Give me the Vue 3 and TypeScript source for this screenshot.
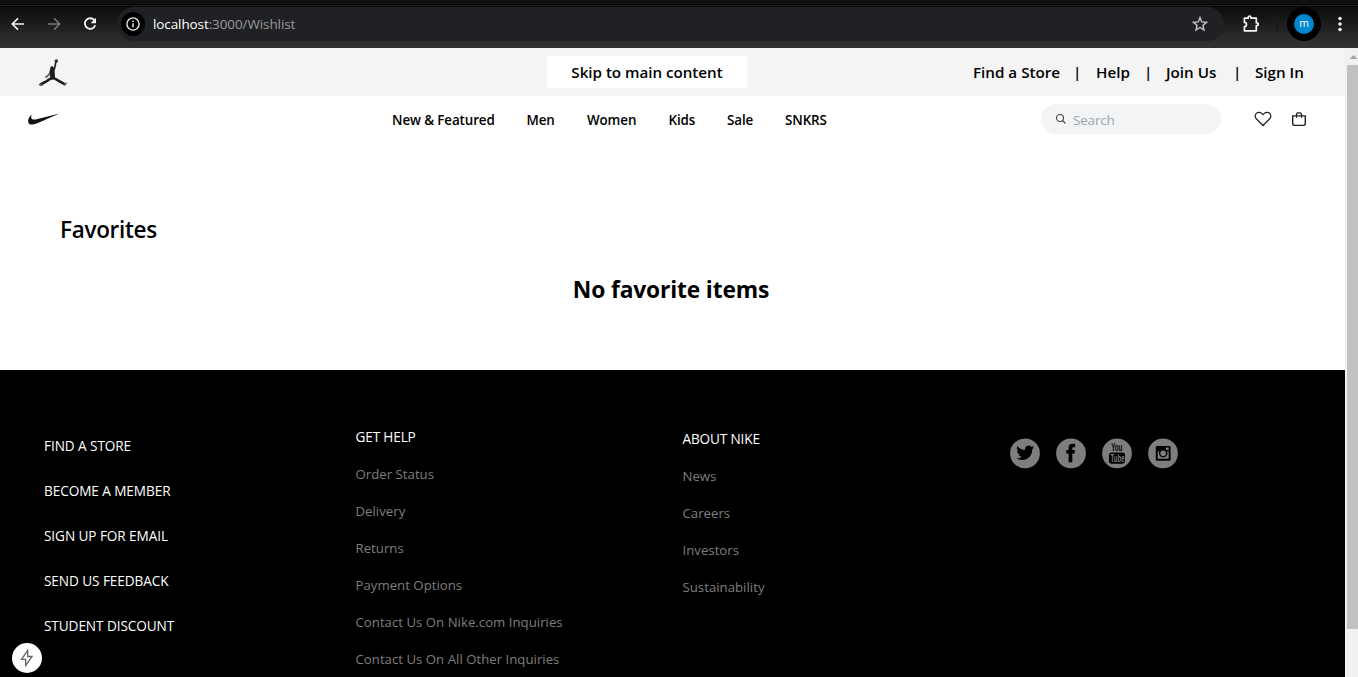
<script setup lang="ts">
interface Column { title: string; key: string; links: string[] }

const topLinks: string[] = ['Find a Store', '|', 'Help', '|', 'Join Us', '|', 'Sign In']
const navItems: string[] = ['New & Featured', 'Men', 'Women', 'Kids', 'Sale', 'SNKRS']
const primaryLinks: string[] = ['FIND A STORE', 'BECOME A MEMBER', 'SIGN UP FOR EMAIL', 'SEND US FEEDBACK', 'STUDENT DISCOUNT']
const columns: Column[] = [
  {
    title: 'GET HELP',
    key: 'help',
    links: ['Order Status', 'Delivery', 'Returns', 'Payment Options', 'Contact Us On Nike.com Inquiries', 'Contact Us On All Other Inquiries'],
  },
  { title: 'ABOUT NIKE', key: 'about', links: ['News', 'Careers', 'Investors', 'Sustainability'] },
]
</script>

<template>
  <div class="window">
    <header class="browser">
      <div class="tabstrip"></div>
      <div class="toolbar">
        <svg class="tool back" viewBox="0 0 16 16"><path d="M14 8H2.5M8 2.3 2.3 8 8 13.7" fill="none" stroke="#f1f1f1" stroke-width="1.7" /></svg>
        <svg class="tool forward" viewBox="0 0 16 16"><path d="M2 8h11.5M8 2.3 13.7 8 8 13.7" fill="none" stroke="#777" stroke-width="1.6" /></svg>
        <svg class="tool reload" viewBox="0 0 16 16"><path d="M12.6 4.6A5.3 5.3 0 1 0 13.2 9.3" fill="none" stroke="#f4f4f4" stroke-width="1.8" /><path d="M14 1.8v5.4H8.6z" fill="#f4f4f4" /></svg>
        <div class="omnibox">
          <span class="info">
            <svg viewBox="0 0 16 16"><circle cx="8" cy="8" r="6.1" fill="none" stroke="#e8e8e8" stroke-width="1.4" /><path d="M8 7.2v4M8 4.5v1.5" stroke="#e8e8e8" stroke-width="1.5" /></svg>
          </span>
          <span class="url"><b>localhost</b>:3000/Wishlist</span>
          <svg class="star" viewBox="0 0 16 16"><path d="m8 1.6 1.8 4.3 4.7.4-3.6 3.1 1.1 4.6L8 11.5 4 14l1.1-4.6-3.6-3.1 4.7-.4z" fill="none" stroke="#c9c9c9" stroke-width="1.35" /></svg>
        </div>
        <svg class="puzzle" viewBox="0 0 18 18"><path d="M2.4 3.2H6.2V2.6a1.4 1.4 0 0 1 2.8 0v.6h5.3v4.7h.6a1.4 1.4 0 0 1 0 2.8h-.6v5.1H2.4v-4.2a2.1 2.1 0 0 0 0-4.2z" fill="none" stroke="#f4f4f4" stroke-width="1.7" stroke-linejoin="round" /></svg>
        <span class="tool-divider"></span>
        <span class="profile"><span class="avatar">m</span></span>
        <svg class="menu" viewBox="0 0 4 16"><circle cx="2" cy="2.5" r="1.75" /><circle cx="2" cy="8" r="1.75" /><circle cx="2" cy="13.5" r="1.75" /></svg>
      </div>
    </header>

    <div class="viewport">
      <div class="page">
        <div class="brandbar">
          <svg class="jordan" viewBox="0 0 30 30"><g fill="none" stroke="#1c1c1c" stroke-linecap="round" stroke-linejoin="round"><path d="M17.9 3.6 17.2 7.5l-1 4" stroke-width="1.6" /><path d="m13.2 12-2 4.5-3 2.6" stroke-width="2" stroke="#666" /><path d="m14.2 12.4.4 7" stroke-width="4.8" /><path d="m14.3 19.5-6 3.8-5.6 3.2M15 19.5l6.1 3.6 5.5 3.1" stroke-width="2.6" /><path d="m1.8 26.6 2 .6M26.3 26.8l1.8-1.3" stroke-width="1.8" stroke="#666" /></g><circle cx="18.3" cy="3" r="1.8" fill="#333" /><circle cx="14" cy="10" r="1.8" fill="#1c1c1c" /></svg>
          <a class="skip">Skip to main content</a>
          <nav class="top-links"><span v-for="(link, i) in topLinks" :key="i" :class="{ bar: link === '|' }">{{ link }}</span></nav>
        </div>

        <div class="mainbar">
          <svg class="swoosh" viewBox="0 0 32 12"><path d="M31.5.6 8.7 10.5C5.1 12 2.2 12 .9 10.4-.8 8.3.4 4.8 3.8 1.3c-1 2.2-.9 4 .3 4.8 1 .7 2.6.6 4.6.1z" fill="#111" /></svg>
          <nav class="nav"><a v-for="item in navItems" :key="item">{{ item }}</a></nav>
          <label class="search">
            <svg viewBox="0 0 12 12"><circle cx="5" cy="5" r="3.5" fill="none" stroke="#444" stroke-width="1.1" /><path d="m7.6 7.6 2.8 2.9" stroke="#444" stroke-width="1.2" /></svg>
            <span>Search</span>
          </label>
          <svg class="heart" viewBox="0 0 18 16"><path d="M9 14.5 2.3 7.8a3.8 3.8 0 0 1 0-5.4 3.8 3.8 0 0 1 5.4 0L9 3.7l1.3-1.3a3.8 3.8 0 0 1 5.4 0 3.8 3.8 0 0 1 0 5.4z" fill="none" stroke="#222" stroke-width="1.25" /></svg>
          <svg class="bag" viewBox="0 0 16 16"><path d="M1.7 4.9h12.6v7.3a2.2 2.2 0 0 1-2.2 2.2H3.9a2.2 2.2 0 0 1-2.2-2.2z" fill="none" stroke="#222" stroke-width="1.4" /><path d="M5.5 6.8V3.3A1.5 1.5 0 0 1 7 1.8h2a1.5 1.5 0 0 1 1.5 1.5v3.5" fill="none" stroke="#222" stroke-width="1.3" /></svg>
        </div>

        <main class="favorites">
          <h1>Favorites</h1>
          <h2>No favorite items</h2>
        </main>

        <footer class="footer">
          <div class="primary"><a v-for="link in primaryLinks" :key="link">{{ link }}</a></div>
          <div v-for="col in columns" :key="col.key" class="column" :class="col.key">
            <strong>{{ col.title }}</strong>
            <a v-for="link in col.links" :key="link">{{ link }}</a>
          </div>
          <div class="social">
            <svg viewBox="0 0 30 30"><circle cx="15" cy="15.4" r="14.9" fill="#7e7e7e" /><path transform="translate(6.3 5.9) scale(.74)" d="M23.95 4.57a10 10 0 0 1-2.82.77 4.96 4.96 0 0 0 2.16-2.72c-.95.55-2 .95-3.13 1.18a4.92 4.92 0 0 0-8.38 4.48C7.69 8.1 4.07 6.13 1.64 3.16a4.92 4.92 0 0 0 1.52 6.57 4.9 4.9 0 0 1-2.23-.61v.06c0 2.38 1.7 4.37 3.95 4.82a5 5 0 0 1-2.21.08 4.94 4.94 0 0 0 4.6 3.42A9.87 9.87 0 0 1 0 19.54a13.99 13.99 0 0 0 7.55 2.21c9.05 0 14-7.5 14-13.98 0-.21 0-.42-.02-.63a9.94 9.94 0 0 0 2.42-2.57z" /></svg>
            <svg viewBox="0 0 30 30"><circle cx="15" cy="15.4" r="14.9" fill="#7e7e7e" /><path d="M12.6 24.3v-8.8h-2.3v-3.6h2.3V9.7c0-2.4 1.4-3.9 3.9-3.9h2.6v3.4h-1.6c-1 0-1.2.5-1.2 1.2v1.5H19l-.4 3.6h-2.3v8.8z" /></svg>
            <svg viewBox="0 0 30 30"><circle cx="15" cy="15.4" r="14.9" fill="#7e7e7e" /><text transform="translate(9.2 12.8) scale(.56 1)" class="yt">You</text><rect x="7" y="14.6" width="16" height="11.2" rx="2.8" /><text transform="translate(8.6 24.1) scale(.6 1)" class="yt tube">Tube</text></svg>
            <svg viewBox="0 0 30 30"><circle cx="15" cy="15.4" r="14.9" fill="#7e7e7e" /><rect x="7.8" y="8" width="14.8" height="14.8" rx="1.4" /><path d="M9.7 13.5h1.6a4.2 4.2 0 1 0 7.8 0h1.6v6.4a.9.9 0 0 1-.9.9h-9.2a.9.9 0 0 1-.9-.9z" fill="#7e7e7e" /><circle cx="15.2" cy="15.3" r="2.8" fill="#7e7e7e" /><rect x="18" y="9.5" width="2.7" height="2.5" rx=".3" fill="#7e7e7e" /></svg>
          </div>
        </footer>
      </div>
      <div class="scrollbar"><svg viewBox="0 0 13 17"><path d="m4.6 11 4-4 4 4z" fill="#a3a3a3" /></svg><div class="thumb"></div></div>
    </div>

    <div class="dev-badge"><svg viewBox="0 0 16 18"><path d="M8.7 1.3 2.5 10.3h4.2v6.2l6.4-9H8.7z" fill="none" stroke="#666" stroke-width="1.3" /></svg></div>
  </div>
</template>

<style>
body { overflow: hidden; }
</style>

<style scoped>
.window { width: 1358px; height: 677px; overflow: hidden; position: relative; font-family: "Open Sans", "Noto Sans", sans-serif; color: #000; }
svg { display: block; flex: none; }
.tabstrip { height: 5px; box-sizing: border-box; background: #101010; border-bottom: 1px solid #000; }
.toolbar { height: 43px; box-sizing: border-box; padding-bottom: 6px; display: flex; align-items: center; background: linear-gradient(#0b0b0b, #303030 90%); border-top: 1px solid #1d1d1d; }
.tool { width: 16px; height: 16px; }
.back { margin-left: 10px; }
.forward { margin-left: 20px; }
.reload { margin-left: 20px; }
.omnibox { width: 1107px; height: 34px; margin-left: 19px; border-radius: 17px; background: #202124; display: flex; align-items: center; }
.info { width: 24px; height: 24px; margin-left: 4px; border-radius: 50%; background: #000; display: flex; align-items: center; justify-content: center; }
.info svg { width: 16px; height: 16px; }
.url { margin-left: 8px; font-size: 13.5px; letter-spacing: -.1px; color: #9a9a9a; }
.url b { font-weight: 400; color: #fff; }
.star { width: 16px; height: 16px; margin: 0 16px 0 auto; }
.puzzle { width: 18px; height: 18px; margin-left: 18px; }
.tool-divider { width: 2px; height: 16px; margin-left: 16px; background: #1b1b1b; }
.profile { width: 34px; height: 34px; margin-left: 9px; border-radius: 50%; background: #000; display: flex; align-items: center; justify-content: center; }
.avatar { width: 20px; height: 20px; border-radius: 50%; background: #0288d1; color: #fff; font-size: 10.5px; line-height: 18px; text-align: center; }
.menu { width: 4px; height: 16px; margin-left: 17px; fill: #f4f4f4; }
.viewport { height: 629px; display: flex; }
.page { width: 1345px; display: flex; flex-direction: column; background: #fff; }
.brandbar { height: 48px; flex: none; display: flex; align-items: center; background: #f4f4f4; font-size: 15.2px; font-weight: 600; }
.jordan { width: 30px; height: 30px; margin: 1px 0 0 38px; }
.skip { width: 200px; height: 32px; margin-left: 479px; background: #fff; text-align: center; line-height: 32px; letter-spacing: -.03px; white-space: nowrap; }
.top-links { margin-left: 226px; display: grid; grid-template-columns: 102px 21px 50px 20px 69px 20px 60px; white-space: nowrap; }
.bar { margin-left: -2px; }
.mainbar { height: 48px; flex: none; display: flex; align-items: center; }
.swoosh { width: 32px; height: 12px; margin: -2px 0 0 28px; }
.nav { width: 649px; margin-left: 332px; display: grid; grid-template-columns: 134.5px 60.5px 81.5px 58.5px 58px 60px; font-size: 13.4px; font-weight: 600; letter-spacing: -.11px; white-space: nowrap; }
.search { box-sizing: border-box; width: 180px; height: 30px; margin-top: -2px; padding-left: 14px; border-radius: 15px; background: #f3f4f6; display: flex; align-items: center; font-size: 13.5px; letter-spacing: -.2px; color: #9ca3af; }
.search svg { width: 12px; height: 12px; }
.search span { margin: 2px 0 0 6px; }
.heart { width: 18px; height: 16px; margin: -2px 0 0 33px; }
.bag { width: 16px; height: 16px; margin: -2px 0 0 19px; }
.favorites { height: 226px; flex: none; }
.favorites h1 { margin: 70px 0 0 60px; font-size: 22.5px; font-weight: 600; line-height: 32px; letter-spacing: -.3px; }
.favorites h2 { margin: 28px 3px 0 0; text-align: center; font-size: 22.8px; font-weight: 700; line-height: 32px; letter-spacing: -.15px; }
.footer { flex: 1; min-height: 0; display: grid; grid-template-columns: 355.5px 327px 327.5px 1fr; align-items: start; background: #000; font-size: 13.2px; white-space: nowrap; }
.primary { padding: 66px 0 0 44px; display: flex; flex-direction: column; gap: 25px; color: #fff; line-height: 20px; font-size: 13.6px; letter-spacing: -.08px; }
.column { display: flex; flex-direction: column; gap: 17px; line-height: 20px; color: #7e7e7e; letter-spacing: .02px; }
.column strong { font-weight: 400; color: #fff; font-size: 13.6px; letter-spacing: -.15px; }
.help { padding-top: 57px; }
.about { padding-top: 59px; }
.social { padding-top: 68px; display: flex; gap: 16px; }
.social svg { width: 30px; height: 30px; overflow: visible; }
.yt { font: 700 11px "Liberation Sans", sans-serif; }
.yt.tube { font-size: 10px; fill: #7e7e7e; }
.scrollbar { width: 13px; background: #f0f0f0; overflow: hidden; }
.scrollbar svg { width: 13px; height: 17px; }
.thumb { height: 564px; margin-left: 2px; background: #c1c1c1; }
.dev-badge { position: absolute; left: 12px; top: 643px; width: 30px; height: 30px; border-radius: 50%; background: #fff; display: flex; align-items: center; justify-content: center; }
.dev-badge svg { width: 16px; height: 18px; }
</style>
